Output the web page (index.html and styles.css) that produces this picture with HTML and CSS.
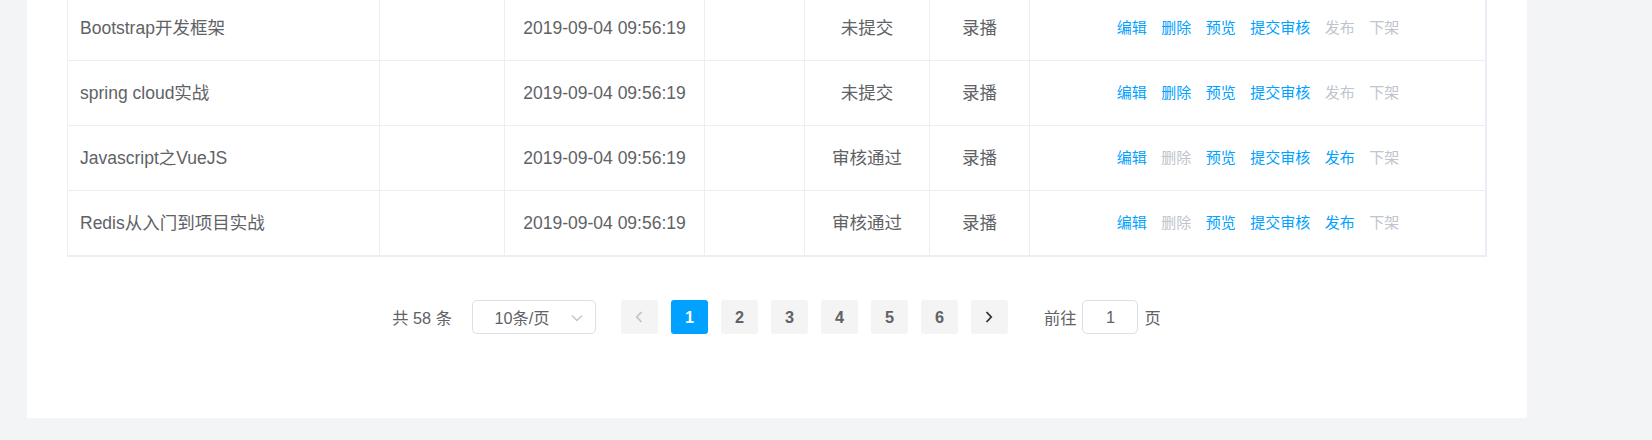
FILE: index.html
```html
<!DOCTYPE html>
<html lang="zh-CN">
<head>
<meta charset="utf-8">
<title>课程列表</title>
<link rel="stylesheet" href="styles.css">
</head>
<body>
<div class="panel">
  <table class="grid">
    <colgroup>
      <col class="c1"><col class="c2"><col class="c3"><col class="c4"><col class="c5"><col class="c6"><col class="c7">
    </colgroup>
    <tbody>
      <tr>
        <td class="left">Bootstrap开发框架</td><td></td><td>2019-09-04 09:56:19</td><td></td><td>未提交</td><td>录播</td>
        <td><div class="ops"><a class="op">编辑</a><a class="op">删除</a><a class="op">预览</a><a class="op">提交审核</a><a class="op off">发布</a><a class="op off">下架</a></div></td>
      </tr>
      <tr>
        <td class="left">spring cloud实战</td><td></td><td>2019-09-04 09:56:19</td><td></td><td>未提交</td><td>录播</td>
        <td><div class="ops"><a class="op">编辑</a><a class="op">删除</a><a class="op">预览</a><a class="op">提交审核</a><a class="op off">发布</a><a class="op off">下架</a></div></td>
      </tr>
      <tr>
        <td class="left">Javascript之VueJS</td><td></td><td>2019-09-04 09:56:19</td><td></td><td>审核通过</td><td>录播</td>
        <td><div class="ops"><a class="op">编辑</a><a class="op off">删除</a><a class="op">预览</a><a class="op">提交审核</a><a class="op">发布</a><a class="op off">下架</a></div></td>
      </tr>
      <tr>
        <td class="left">Redis从入门到项目实战</td><td></td><td>2019-09-04 09:56:19</td><td></td><td>审核通过</td><td>录播</td>
        <td><div class="ops"><a class="op">编辑</a><a class="op off">删除</a><a class="op">预览</a><a class="op">提交审核</a><a class="op">发布</a><a class="op off">下架</a></div></td>
      </tr>
    </tbody>
  </table>

  <div class="pager">
    <span class="total">共 58 条</span>
    <div class="sizes">
      <span class="sizes-text">10条/页</span>
      <svg class="caret" width="12" height="8" viewBox="0 0 12 8"><path d="M1 1.5 L6 6.5 L11 1.5" fill="none" stroke="#c0c4cc" stroke-width="1.3"/></svg>
    </div>
    <div class="pages">
      <button class="pbtn nav disabled"><svg width="8" height="12" viewBox="0 0 8 12"><path d="M6.5 1 L1.8 6 L6.5 11" fill="none" stroke="#c0c4cc" stroke-width="1.8"/></svg></button>
      <button class="pbtn active">1</button>
      <button class="pbtn">2</button>
      <button class="pbtn">3</button>
      <button class="pbtn">4</button>
      <button class="pbtn">5</button>
      <button class="pbtn">6</button>
      <button class="pbtn nav"><svg width="8" height="12" viewBox="0 0 8 12"><path d="M1.5 1 L6.2 6 L1.5 11" fill="none" stroke="#303133" stroke-width="1.8"/></svg></button>
    </div>
    <div class="jump">
      <span>前往</span>
      <div class="jump-input">1</div>
      <span>页</span>
    </div>
  </div>
</div>
</body>
</html>
```

FILE: styles.css
```css
html, body {
  margin: 0;
  padding: 0;
  background: #f3f4f6;
  height: 440px;
  overflow: hidden;
}

body {
  font-family: "Liberation Sans", Arial, "Noto Sans CJK SC", sans-serif;
  color: #606266;
}

.panel {
  width: 1420px;
  margin: -4px 0 0 27px;
  padding: 0 40px 84px;
  background: #ffffff;
}

.grid {
  width: 1420px;
  table-layout: fixed;
  border-collapse: separate;
  border-spacing: 0;
  border-left: 1px solid #ebeef5;
  border-right: 1px solid #ebeef5;
  border-bottom: 1px solid #ebeef5;
  font-size: 17.5px;
}

.c1 { width: 312px; }
.c2 { width: 125px; }
.c3 { width: 200px; }
.c4 { width: 100px; }
.c5 { width: 125px; }
.c6 { width: 100px; }
.c7 { width: 456px; }

.grid td {
  height: 65px;
  padding: 0 12px;
  box-sizing: border-box;
  border-right: 1px solid #ebeef5;
  border-bottom: 1px solid #ebeef5;
  text-align: center;
  vertical-align: middle;
  white-space: nowrap;
  line-height: 22px;
  color: #606266;
}

.grid td.left {
  text-align: left;
  padding-left: 12px;
}

.ops {
  display: flex;
  justify-content: center;
  gap: 14.5px;
  font-size: 15px;
  padding-left: 1px;
}

.op {
  color: #00a1ff;
  cursor: pointer;
}

.op.off {
  color: #c0c4cc;
}

.pager {
  display: flex;
  justify-content: center;
  align-items: center;
  margin-top: 43px;
  height: 34px;
  font-size: 16.25px;
  padding-right: 1px;
}

.total {
  margin-right: 20px;
}

.sizes {
  position: relative;
  width: 124px;
  height: 34px;
  box-sizing: border-box;
  border: 1px solid #dcdfe6;
  border-radius: 5px;
  display: flex;
  align-items: center;
  padding-right: 30px;
  margin-right: 25px;
}

.sizes-text {
  flex: 1;
  text-align: center;
  padding-left: 6px;
}

.caret {
  position: absolute;
  right: 12px;
  top: 13px;
}

.pages {
  display: flex;
  gap: 13px;
}

.pbtn {
  width: 37px;
  height: 34px;
  border: none;
  border-radius: 3px;
  background: #f4f4f5;
  color: #606266;
  font-family: "Liberation Sans", Arial, sans-serif;
  font-size: 16.25px;
  font-weight: bold;
  display: flex;
  align-items: center;
  justify-content: center;
  padding: 0;
}

.pbtn.active {
  background: #00a1ff;
  color: #ffffff;
}

.jump {
  display: flex;
  align-items: center;
  margin-left: 36px;
}

.jump-input {
  width: 56px;
  height: 34px;
  box-sizing: border-box;
  border: 1px solid #dcdfe6;
  border-radius: 5px;
  margin: 0 6px;
  display: flex;
  align-items: center;
  justify-content: center;
}
```
